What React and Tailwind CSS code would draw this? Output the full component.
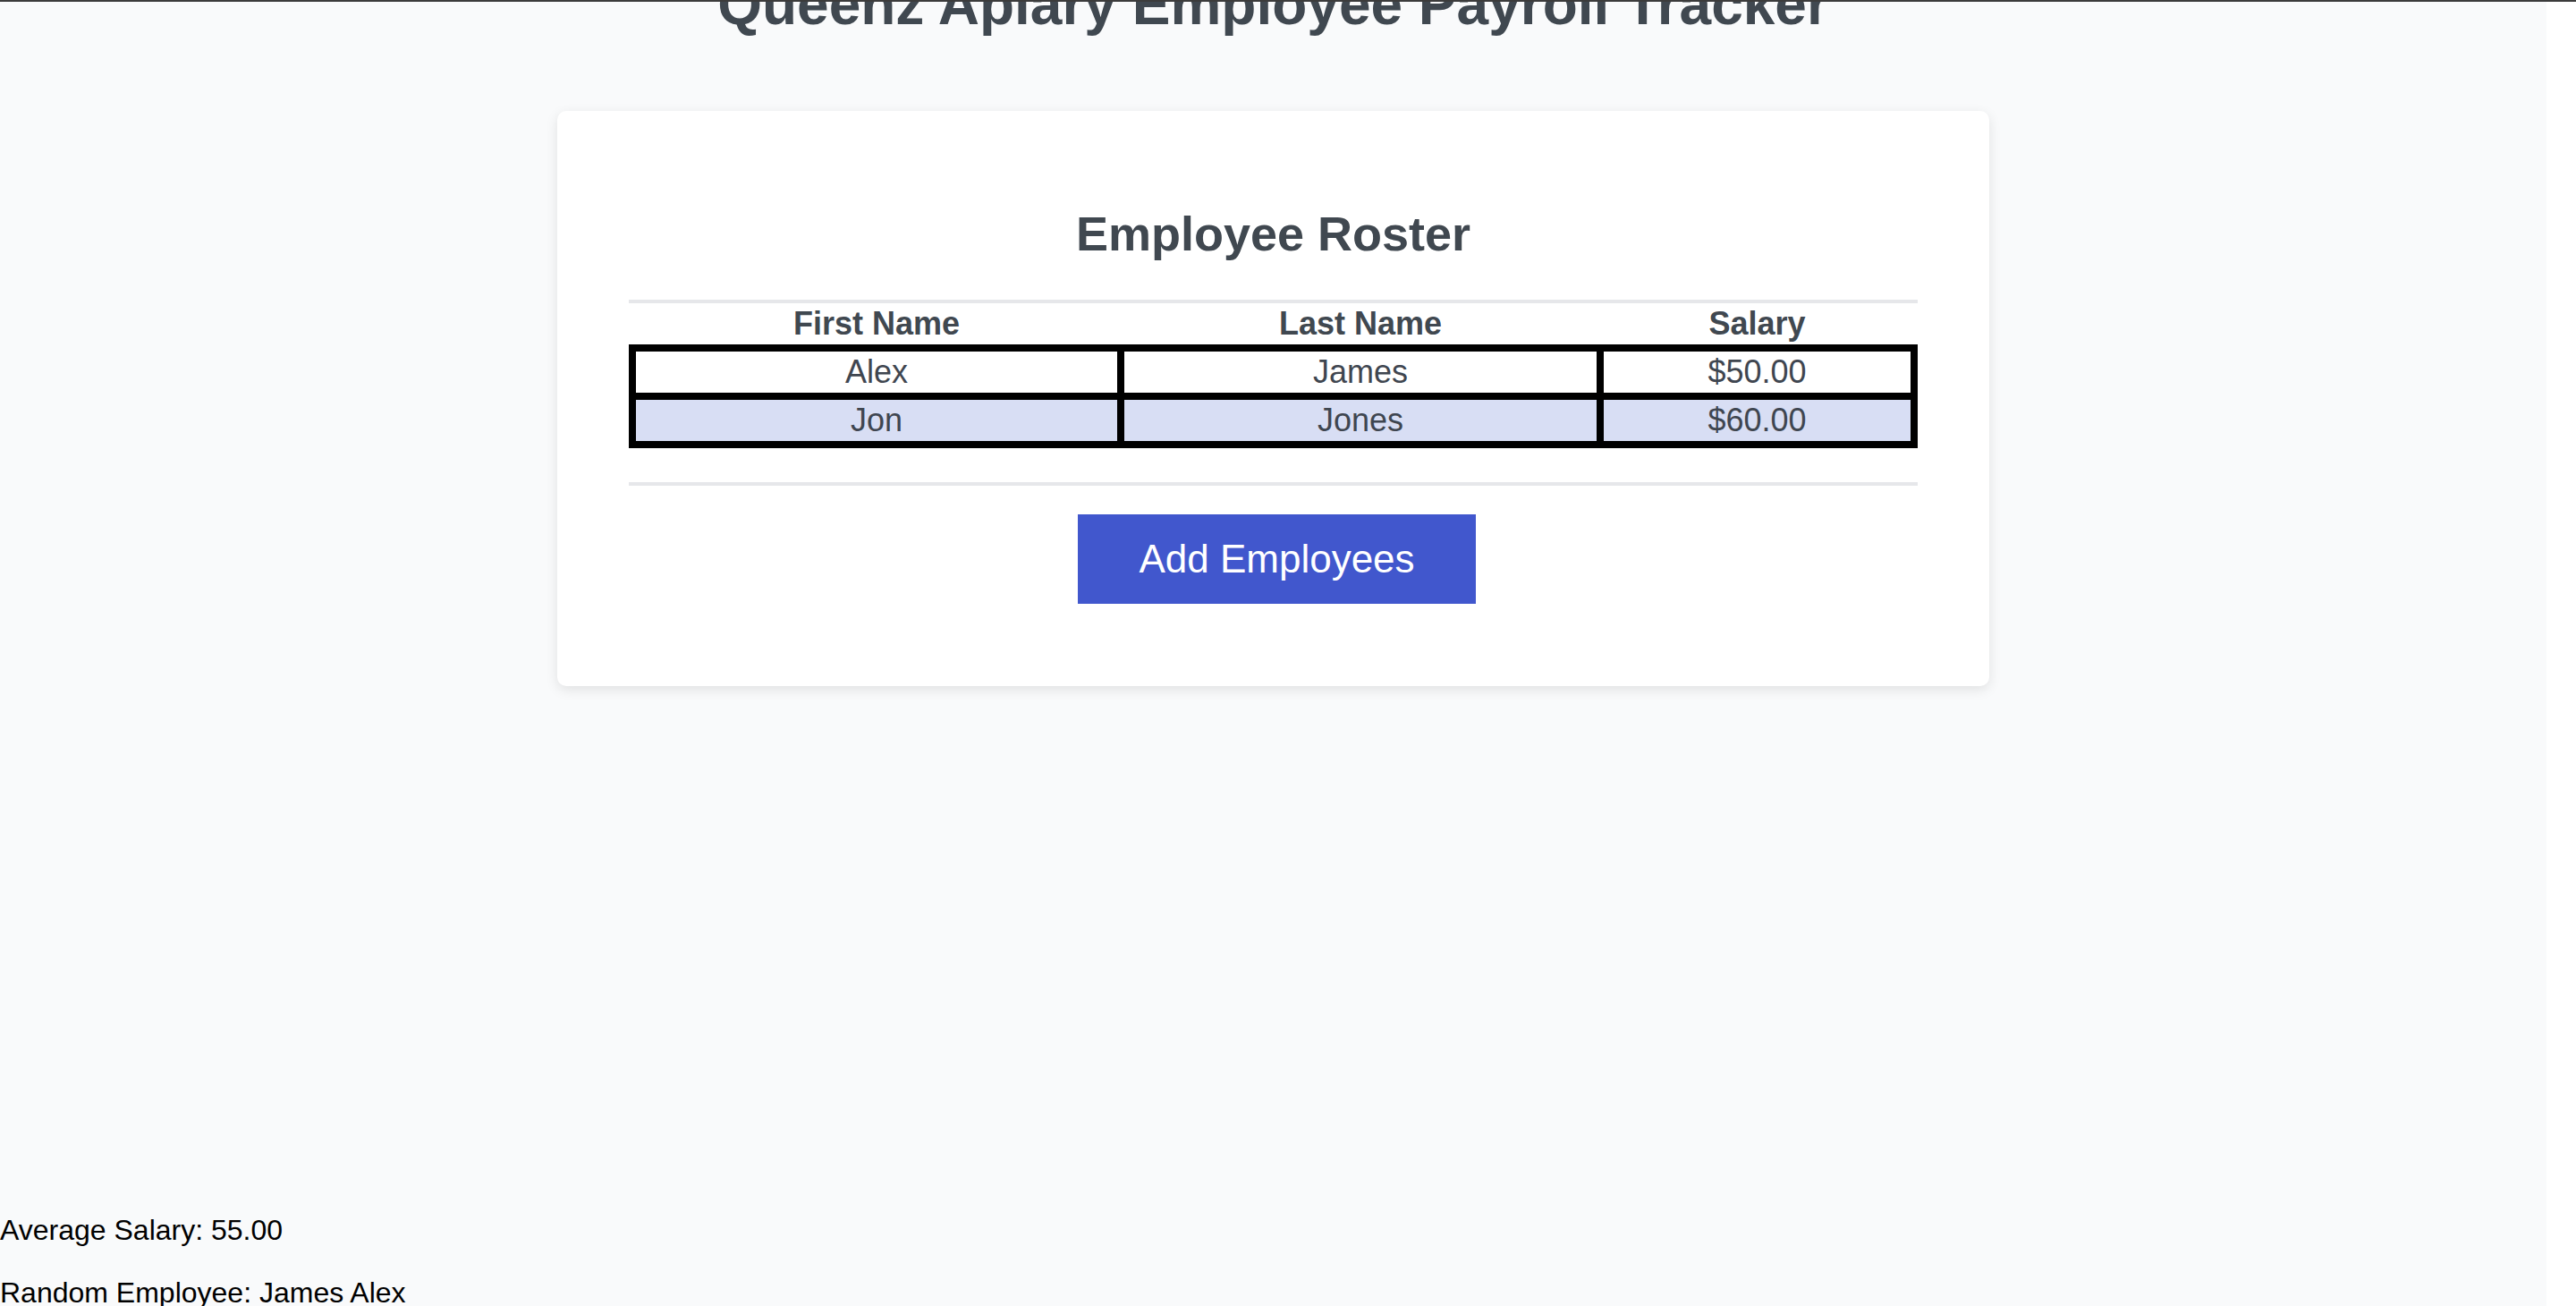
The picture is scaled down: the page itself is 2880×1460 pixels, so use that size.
export default function App() {
  const rows = [
    { first: "Alex", last: "James", salary: "$50.00", bg: "bg-white" },
    { first: "Jon", last: "Jones", salary: "$60.00", bg: "bg-[#d8def4]" },
  ];
  return (
    <div className="w-[2880px] h-[1460px] overflow-hidden bg-white font-['Liberation_Sans',Arial,sans-serif]">
      <div className="h-[2px] w-full bg-[#3c3c3c]" />
      <div className="flex h-[1458px] overflow-hidden">
        <div className="w-[2847px] shrink-0 bg-[#f9fafb] flex flex-col">
          <h1 className="shrink-0 mt-[-34px] text-center text-[64px] font-bold leading-[74px] text-[#404850]">
            Queenz Apiary Employee Payroll Tracker
          </h1>
          <div className="shrink-0 mt-[82px] mx-auto w-[1601px] h-[643px] bg-white rounded-[10px] shadow-[0_4px_14px_rgba(0,0,0,0.1)] px-[80px] flex flex-col">
            <h2 className="mt-[106px] h-[62px] text-center text-[54px] font-bold leading-[62px] text-[#404850]">
              Employee Roster
            </h2>
            <div className="mt-[43px] h-[4px] bg-[#e6e7ea]" />
            <div className="grid grid-cols-[538px_528px_343px] gap-x-[8px] px-[8px] h-[46px] items-center text-[36px] leading-[46px] font-bold text-[#404850] text-center">
              <div>First Name</div>
              <div>Last Name</div>
              <div>Salary</div>
            </div>
            <div className="grid grid-cols-[538px_528px_343px] gap-[8px] p-[8px] bg-black text-[36px] leading-[46px] text-[#3f4650] text-center">
              {rows.map((r) => (
                <div key={r.first} className="contents">
                  <div className={`${r.bg} h-[46px]`}>{r.first}</div>
                  <div className={`${r.bg} h-[46px]`}>{r.last}</div>
                  <div className={`${r.bg} h-[46px]`}>{r.salary}</div>
                </div>
              ))}
            </div>
            <div className="mt-[38px] h-[4px] bg-[#e6e7ea]" />
            <div className="mt-[32px] flex justify-center">
              <button className="ml-[8px] w-[445px] h-[100px] bg-[#4157cd] text-white text-[44px] leading-[100px] text-center">
                Add Employees
              </button>
            </div>
          </div>
          <p className="shrink-0 mt-[590px] text-[32px] leading-[37px] text-black">Average Salary: 55.00</p>
          <p className="shrink-0 mt-[33px] text-[32px] leading-[37px] text-black">Random Employee: James Alex</p>
        </div>
        <div className="w-[33px] shrink-0 bg-white" />
      </div>
    </div>
  );
}
